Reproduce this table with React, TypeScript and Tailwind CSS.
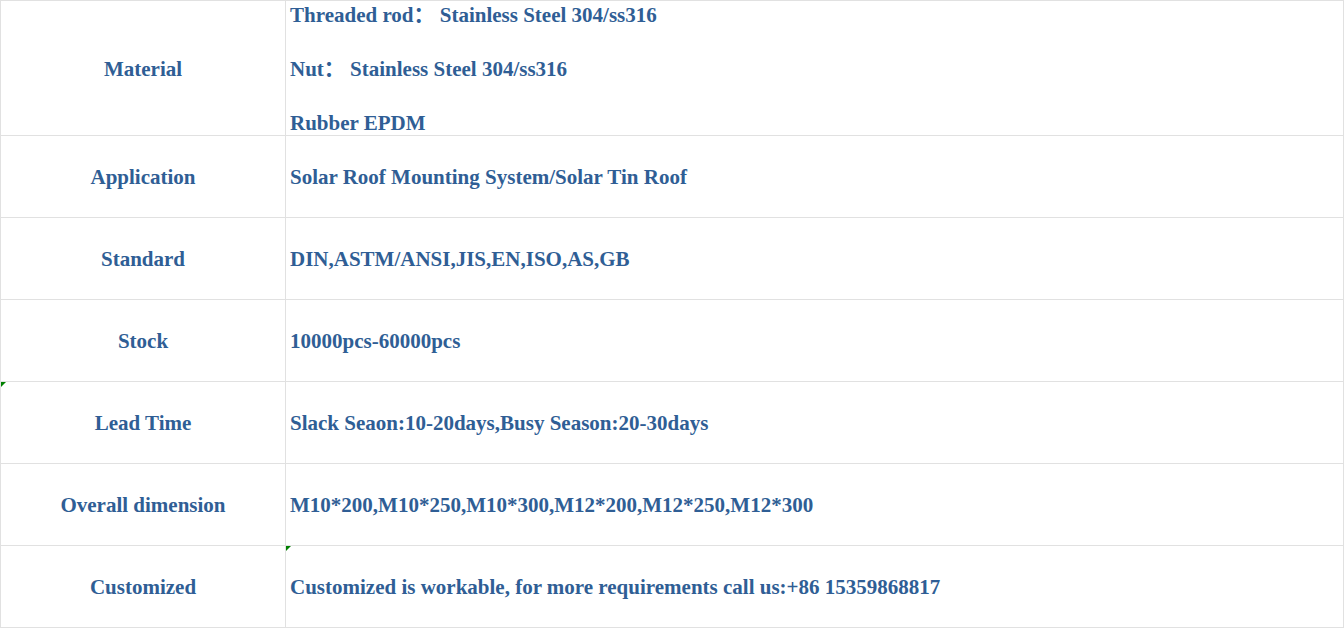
const ROWS = [
  { label: 'Application', value: 'Solar Roof Mounting System/Solar Tin Roof' },
  { label: 'Standard', value: 'DIN,ASTM/ANSI,JIS,EN,ISO,AS,GB' },
  { label: 'Stock', value: '10000pcs-60000pcs' },
  { label: 'Lead Time', value: 'Slack Seaon:10-20days,Busy Season:20-30days', flagLeft: true },
  { label: 'Overall dimension', value: 'M10*200,M10*250,M10*300,M12*200,M12*250,M12*300' },
  { label: 'Customized', value: 'Customized is workable, for more requirements call us:+86 15359868817', flagRight: true },
]

function Flag() {
  return (
    <span className="absolute left-0 top-0 w-0 h-0 border-t-[5px] border-t-[#008000] border-r-[5px] border-r-transparent" />
  )
}

export default function App() {
  return (
    <div
      className="w-[1344px] h-[628px] bg-white border-t border-l border-r border-[#e1e1e1] text-[21px] font-bold text-[#2f5e95] overflow-hidden"
      style={{ fontFamily: '"Liberation Serif", "Times New Roman", "Noto Sans CJK SC", serif' }}
    >
      <div className="flex h-[135px] border-b border-[#e1e1e1]">
        <div className="w-[285px] shrink-0 border-r border-[#e1e1e1] flex items-center justify-center pt-[3px]">
          Material
        </div>
        <div className="flex-1 flex flex-col justify-center overflow-hidden pl-1 pt-[3px]">
          <div className="h-[54px] shrink-0 flex items-center whitespace-pre">Threaded rod： Stainless Steel 304/ss316</div>
          <div className="h-[54px] shrink-0 flex items-center whitespace-pre">Nut： Stainless Steel 304/ss316</div>
          <div className="h-[54px] shrink-0 flex items-center">Rubber EPDM</div>
        </div>
      </div>
      {ROWS.map(r => (
        <div key={r.label} className="flex h-[82px] border-b border-[#e1e1e1]">
          <div className="relative w-[285px] shrink-0 border-r border-[#e1e1e1] flex items-center justify-center pt-[2px]">
            {r.flagLeft && <Flag />}
            {r.label}
          </div>
          <div className="relative flex-1 flex items-center pl-1 pt-[2px] whitespace-nowrap">
            {r.flagRight && <Flag />}
            {r.value}
          </div>
        </div>
      ))}
    </div>
  )
}
